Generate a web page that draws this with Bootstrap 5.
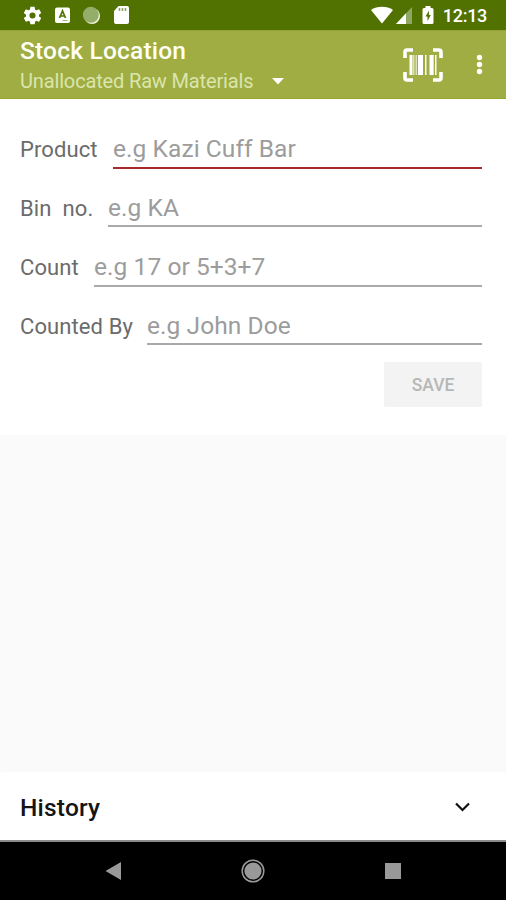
<!DOCTYPE html>
<html lang="en">
<head>
<meta charset="utf-8">
<meta name="viewport" content="width=device-width, initial-scale=1">
<title>Stock Location</title>
<link href="https://cdn.jsdelivr.net/npm/bootstrap@5.3.0/dist/css/bootstrap.min.css" rel="stylesheet">
<style>
body { font-family: Roboto, "Liberation Sans", sans-serif; background: #fafafa; height: 900px; overflow: hidden; }
svg { display: block; flex: none; }
.status-bar { height: 30px; background: #517200; padding: 0 19px 0 22px; }
.status-icons { gap: 9.5px; }
.clock { font-size: 18px; font-weight: 500; line-height: 30px; letter-spacing: -.3px; margin-left: 8px; padding-top: 1px; }
.app-bar { height: 69px; background: #9fad42; border-top: 1px solid #93a337; border-bottom: 1px solid #94a82c; padding: 0 18px 0 20px; }
.app-title { font-size: 24.5px; font-weight: 500; line-height: 28px; letter-spacing: .2px; color: #fffff5; padding-top: 6px; }
.app-subtitle { font-size: 20px; line-height: 24px; letter-spacing: -.15px; color: #dbe5ae; padding-top: 4px; gap: 19px; }
.entry-form { height: 336px; padding: 11px 24px 0 20px; }
.entry-row { height: 59px; padding-top: 20px; }
.entry-row.raised { height: 58px; padding-top: 19px; }
.entry-row.raised + .entry-row { height: 60px; padding-top: 21px; }
.entry-row label { font-size: 22px; line-height: 38px; letter-spacing: .1px; padding-top: 1px; color: #6b6b6b; white-space: pre; }
.entry-row input { font-size: 24.500px; letter-spacing: .07px; line-height: 37px; height: 39px; border: 0; border-bottom: 2px solid #aaa; padding: 0; color: #444; outline: 0; border-radius: 0; min-width: 0; }
.entry-row.raised input { padding-top: 1px; }
.entry-row.raised label { padding-top: 2px; }
.entry-row input::placeholder { color: #9c9c9c; opacity: 1; }
.entry-row .active-field { border-bottom-color: #a82a2a; }
.w-product { width: 93px; } .w-bin { width: 88px; } .w-count { width: 74px; } .w-by { width: 127px; }
.save-btn, .save-btn:disabled { width: 98px; height: 45px; margin-top: 17px; background: #f3f3f3; color: #b7b7b7; border: 0; border-radius: 2px; font-size: 17.5px; font-weight: 500; opacity: 1; padding: 1px 0 0; }
.history { height: 70px; padding: 2px 36px 0 20px; border-bottom: 2px solid #8b8b8b; border-radius: 4px 4px 0 0; }
.history-title { font-size: 24.5px; letter-spacing: .2px; font-weight: 500; color: #151515; line-height: 36px; padding-top: 2px; }
.nav-keys { height: 58px; padding: 0 104px; }
</style>
</head>
<body class="d-flex flex-column">
<div class="status-bar d-flex align-items-center justify-content-between text-white">
  <div class="status-icons d-flex align-items-center">
    <svg width="21" height="21" viewBox="0 0 24 24" fill="#fff"><path d="M19.4 13a7.500 7.500 0 0 0 0-2l2.200-1.700c.2-.1.200-.4.100-.6l-2-3.500c-.1-.2-.4-.3-.6-.2l-2.500 1a7 7 0 0 0-1.700-1l-.4-2.600c0-.2-.2-.4-.5-.4h-4c-.3 0-.5.2-.5.400L9.100 5a7 7 0 0 0-1.700 1l-2.500-1c-.2-.1-.5 0-.6.2l-2 3.500c-.1.200-.1.500.1.600L4.600 11a7.500 7.500 0 0 0 0 2l-2.200 1.700c-.2.100-.2.400-.1.600l2 3.500c.1.200.4.300.6.2l2.500-1a7 7 0 0 0 1.700 1l.4 2.600c0 .2.200.4.500.4h4c.3 0 .5-.2.500-.4l.4-2.600a7 7 0 0 0 1.700-1l2.500 1c.2.100.5 0 .6-.2l2-3.500c.1-.2.100-.5-.1-.6zM12 15.500a3.500 3.500 0 1 1 0-7 3.500 3.500 0 0 1 0 7z"/></svg>
    <svg width="19" height="18" viewBox="0 0 19 18"><rect x="2" y="1.500" width="15" height="15.500" rx="2" fill="#fff"/><path d="M6.500 12 9.500 5l3 7M7.600 10h3.800" fill="none" stroke="#517200" stroke-width="1.700"/><path d="M9.500 14.500h5" stroke="#9db278"/></svg>
    <svg width="20" height="20" viewBox="0 0 20 20"><circle cx="11" cy="11" r="8" fill="#eef3df"/><circle cx="9.800" cy="9.800" r="8" fill="#94ad68"/></svg>
    <svg width="20" height="20" viewBox="0 0 20 20"><path d="M7.500 1H16a2 2 0 0 1 2 2v14a2 2 0 0 1-2 2H5a2 2 0 0 1-2-2V6z" fill="#fff"/><path d="M8.500 3v3M11.500 3v3M14.500 3v3" stroke="#8da361" stroke-width="1.600"/></svg>
  </div>
  <div class="d-flex align-items-center">
    <svg width="64" height="22" viewBox="0 0 64 22"><path d="M0 6C6 1.600 16 1.600 22 6L11 19.500z" fill="#fff"/><path d="M41 3v17H25z" fill="#8fa765"/><path d="M35 9.300V20H25z" fill="#fff"/><path d="M54.500 2h5v2h1.500a1.500 1.500 0 0 1 1.500 1.500v13A1.500 1.500 0 0 1 61 20h-8a1.500 1.500 0 0 1-1.500-1.500v-13A1.500 1.500 0 0 1 53 4h1.500z" fill="#fff"/><path d="m58 6.500-3.500 6h2v4.500l3.300-6h-1.900z" fill="#517200"/></svg>
    <span class="clock">12:13</span>
  </div>
</div>
<header class="app-bar d-flex justify-content-between">
  <div>
    <div class="app-title">Stock Location</div>
    <div class="app-subtitle d-flex align-items-center"><span>Unallocated Raw Materials</span><svg width="12" height="7" viewBox="0 0 12 7"><path d="M0 0h12L6 6.500z" fill="#fff"/></svg></div>
  </div>
  <div class="d-flex align-items-center">
    <svg width="40" height="34" viewBox="0 0 40 34"><path d="M2 10V4a2 2 0 0 1 2-2h6M30 2h6a2 2 0 0 1 2 2v6M38 24v6a2 2 0 0 1-2 2h-6M10 32H4a2 2 0 0 1-2-2v-6" fill="none" stroke="#fff" stroke-width="3.600"/><path d="M6.500 7h3v20h-3zM15 7h5v20h-5zM22 7h1.500v20H22zM26.500 7h3.500v20h-3.500zM32 7h1.500v20H32z" fill="#fff"/><path d="M10 7h1.500v20H10zM12.500 7H14v20h-1.500zM30 7h1v20h-1z" fill="#dce2b9"/></svg>
    <svg class="ms-4 me-1" width="17" height="22" viewBox="0 0 17 22" fill="#fff"><circle cx="12.500" cy="3.500" r="2.700"/><circle cx="12.500" cy="10.500" r="2.700"/><circle cx="12.500" cy="17.500" r="2.700"/></svg>
  </div>
</header>
<form class="entry-form bg-white">
  <div class="entry-row d-flex"><label class="w-product" for="product">Product</label><input class="flex-grow-1 active-field" id="product" placeholder="e.g Kazi Cuff Bar"></div>
  <div class="entry-row raised d-flex"><label class="w-bin" for="bin">Bin  no.</label><input class="flex-grow-1" id="bin" placeholder="e.g KA"></div>
  <div class="entry-row d-flex"><label class="w-count" for="count">Count</label><input class="flex-grow-1" id="count" placeholder="e.g 17 or 5+3+7"></div>
  <div class="entry-row raised d-flex"><label class="w-by" for="by">Counted By</label><input class="flex-grow-1" id="by" placeholder="e.g John Doe"></div>
  <div class="d-flex justify-content-end"><button class="btn save-btn" type="button" disabled>SAVE</button></div>
</form>
<section class="history bg-white d-flex align-items-center justify-content-between mt-auto">
  <div class="history-title">History</div>
  <svg width="15" height="10" viewBox="0 0 15 10"><path d="m1 1.500 6.500 6.500L14 1.500" fill="none" stroke="#111" stroke-width="2.200"/></svg>
</section>
<nav class="nav-keys bg-black d-flex align-items-center justify-content-between">
  <svg width="18" height="18" viewBox="0 0 18 18"><path d="M17 0v18L1.500 9z" fill="#999"/></svg>
  <svg width="24" height="24" viewBox="0 0 24 24"><circle cx="12" cy="12" r="10.800" fill="none" stroke="#999" stroke-width="1.500"/><circle cx="12" cy="12" r="8.600" fill="#999"/></svg>
  <svg width="18" height="18" viewBox="0 0 18 18"><path d="M1 1h16v16H1z" fill="#999"/></svg>
</nav>
<script src="https://cdn.jsdelivr.net/npm/bootstrap@5.3.0/dist/js/bootstrap.bundle.min.js"></script>
</body>
</html>
